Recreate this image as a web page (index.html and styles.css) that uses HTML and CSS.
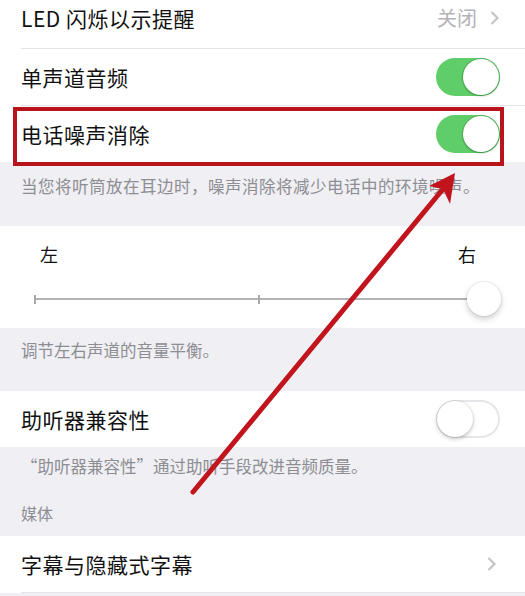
FILE: index.html
```html
<!DOCTYPE html>
<html lang="zh-CN">
<head>
<meta charset="utf-8">
<title>音频设置</title>
<link rel="stylesheet" href="styles.css">
</head>
<body>
<div class="screen">
  <section class="group">
    <div class="row first">
      <span class="label">LED 闪烁以示提醒</span>
      <span class="detail">关闭<svg class="chev" viewBox="0 0 10 16"><path d="M2 2 L8 8 L2 14" /></svg></span>
    </div>
    <div class="row">
      <span class="label">单声道音频</span>
      <span class="switch on"><span class="knob"></span></span>
    </div>
    <div class="row last">
      <span class="label">电话噪声消除</span>
      <span class="switch on"><span class="knob"></span></span>
    </div>
  </section>
  <p class="note note-a">当您将听筒放在耳边时，噪声消除将减少电话中的环境噪声。</p>

  <section class="group balance">
    <div class="ends"><span>左</span><span>右</span></div>
    <div class="slider">
      <span class="track"></span>
      <span class="tick tick-l"></span>
      <span class="tick tick-m"></span>
      <span class="thumb"></span>
    </div>
  </section>
  <p class="note note-b">调节左右声道的音量平衡。</p>

  <section class="group">
    <div class="row last">
      <span class="label">助听器兼容性</span>
      <span class="switch"><span class="knob"></span></span>
    </div>
  </section>
  <p class="note note-c">“助听器兼容性”通过助听手段改进音频质量。</p>
  <p class="header">媒体</p>

  <section class="group">
    <div class="row">
      <span class="label">字幕与隐藏式字幕</span>
      <svg class="chev solo" viewBox="0 0 10 16"><path d="M2 2 L8 8 L2 14" /></svg>
    </div>
  </section>

  <div class="callout"></div>
  <svg class="arrow" viewBox="0 0 525 596">
    <line x1="193" y1="492" x2="448" y2="183" />
    <path d="M455 173 L429 186 L443 189 L450 204 Z" />
  </svg>
</div>
</body>
</html>
```

FILE: styles.css
```css
html, body {
  margin: 0;
  padding: 0;
  background: #efeff4;
}

.screen {
  position: relative;
  width: 525px;
  height: 596px;
  overflow: hidden;
  background: #efeff4;
  font-family: "Noto Sans CJK SC", "Noto Sans", sans-serif;
  color: #111111;
}

.group {
  background: #ffffff;
}

.row {
  display: flex;
  align-items: center;
  justify-content: space-between;
  height: 57px;
  margin-left: 21px;
  padding-right: 26px;
  border-bottom: 1px solid #e4e4e8;
  box-sizing: border-box;
}

.row.first {
  height: 49px;
  align-items: flex-start;
  padding-top: 3px;
}

.row.last {
  border-bottom: none;
  height: 56px;
}

.label {
  font-size: 21px;
  line-height: 30px;
  letter-spacing: 0.5px;
}

.detail {
  display: flex;
  align-items: center;
  gap: 12px;
  font-size: 20px;
  line-height: 30px;
  color: #b4b4b8;
  margin-right: -1px;
}

.chev {
  width: 11px;
  height: 16px;
  fill: none;
  stroke: #c4c4c8;
  stroke-width: 2.2px;
}

.chev.solo {
  margin-right: 2px;
}

.switch {
  position: relative;
  width: 64px;
  height: 38px;
  border-radius: 19px;
  background: #ffffff;
  box-shadow: inset 0 0 0 2px #e6e6ea;
  margin-right: -1px;
}

.switch.on {
  background: #5fcd68;
  box-shadow: none;
}

.switch .knob {
  position: absolute;
  top: 1px;
  left: 1px;
  width: 36px;
  height: 36px;
  border-radius: 50%;
  background: #ffffff;
  box-shadow: 0 2px 4px rgba(0, 0, 0, 0.22), 0 0 0 1px rgba(0, 0, 0, 0.06);
}

.switch.on .knob {
  left: 27px;
  box-shadow: 0 1px 2px rgba(0, 60, 10, 0.35), 0 0 0 1px rgba(60, 150, 70, 0.45);
}

.note {
  margin: 0;
  padding: 0 21px;
  font-size: 16.5px;
  color: #8d8d92;
  line-height: 24px;
}

.note-a {
  height: 64px;
  padding-top: 12px;
  letter-spacing: 0.5px;
  box-sizing: border-box;
}

.note-b {
  height: 63px;
  padding-top: 10px;
  box-sizing: border-box;
}

.note-c {
  height: 50px;
  padding-top: 7px;
  box-sizing: border-box;
}

.header {
  margin: 0;
  padding: 0 21px;
  height: 39px;
  font-size: 16px;
  line-height: 24px;
  padding-top: 4px;
  box-sizing: border-box;
  color: #8d8d92;
}

.balance {
  height: 102px;
  padding: 15px 0 0;
  box-sizing: border-box;
}

.ends {
  display: flex;
  justify-content: space-between;
  padding: 0 49px 0 40px;
  font-size: 18px;
  line-height: 26px;
}

.slider {
  position: relative;
  height: 40px;
  margin: 13px 24px 0 34px;
}

.slider .track {
  position: absolute;
  left: 0;
  right: 17px;
  top: 18px;
  height: 2px;
  background: #b3b3b6;
}

.slider .tick {
  position: absolute;
  top: 15px;
  width: 2px;
  height: 9px;
  background: #a8a8ab;
}

.tick-l { left: 0; }
.tick-m { left: 224px; }

.slider .thumb {
  position: absolute;
  right: 0;
  top: 2px;
  width: 34px;
  height: 34px;
  border-radius: 50%;
  background: #ffffff;
  box-shadow: 0 3px 6px rgba(0, 0, 0, 0.2), 0 0 0 1px rgba(0, 0, 0, 0.05);
}

.callout {
  position: absolute;
  left: 13px;
  top: 107px;
  width: 491px;
  height: 59px;
  border: 4px solid #b8141c;
  box-sizing: border-box;
}

.arrow {
  position: absolute;
  left: 0;
  top: 0;
  width: 525px;
  height: 596px;
  pointer-events: none;
}

.arrow line {
  stroke: #c1141c;
  stroke-width: 5;
  stroke-linecap: round;
}

.arrow path {
  fill: #c1141c;
}
```
